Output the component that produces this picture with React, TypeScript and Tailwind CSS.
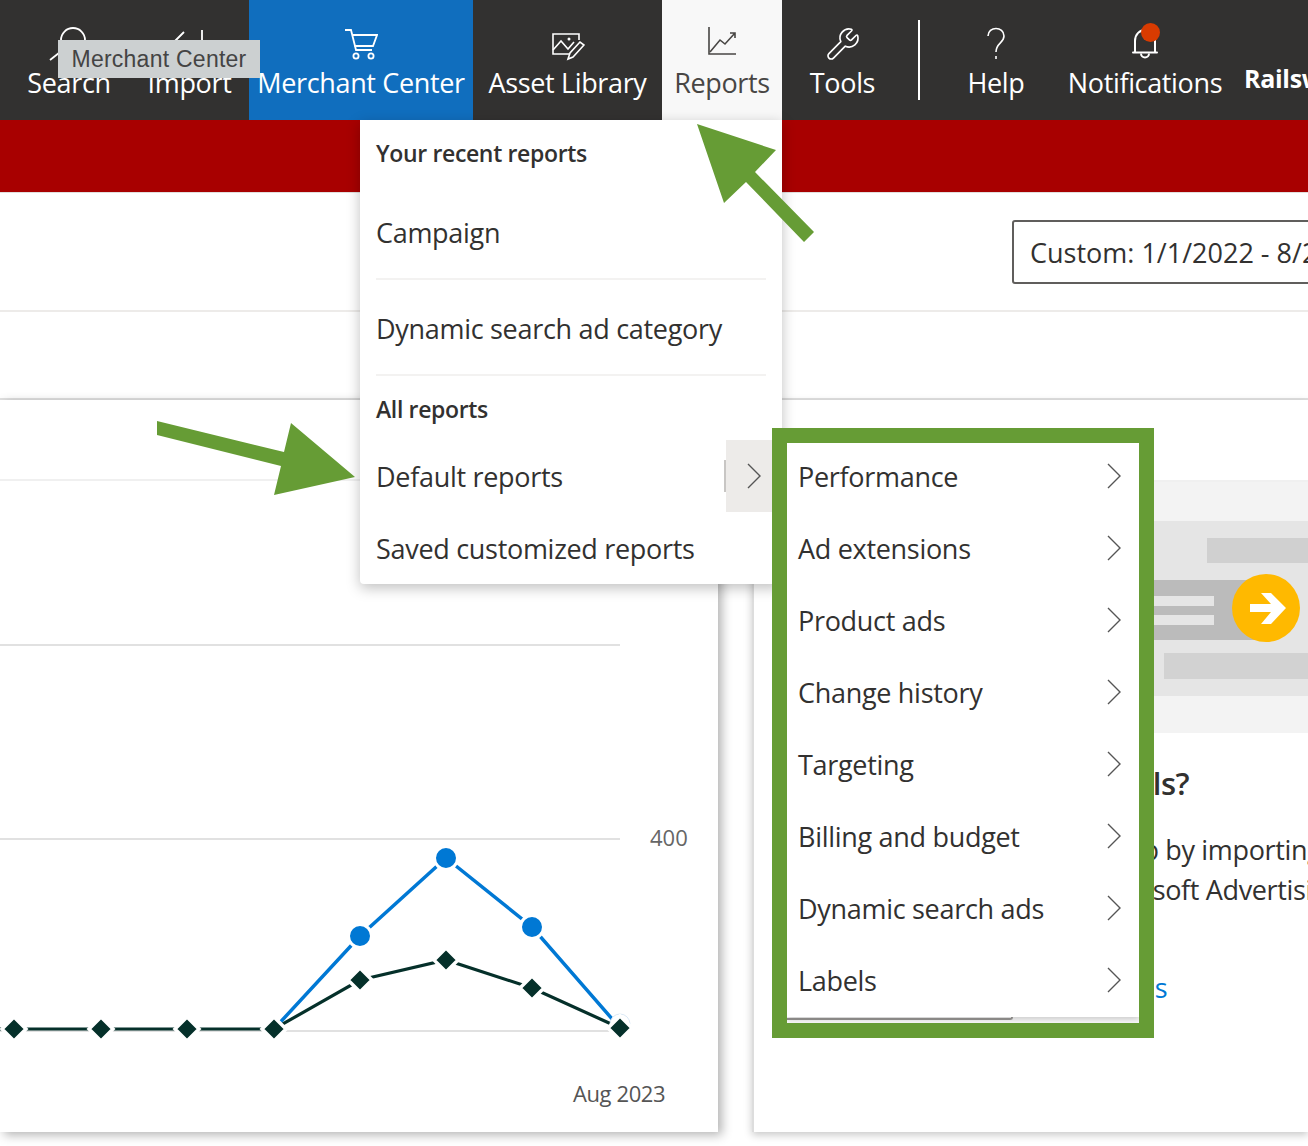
import React from "react";
import { Wrench } from "lucide-react";

const FONT = "[font-family:'Open_Sans','Noto_Sans',sans-serif]";

function Chevron({ className = "" }: { className?: string }) {
  return (
    <svg width="14" height="26" viewBox="0 0 14 26" className={className} fill="none" stroke="#555" strokeWidth="1.4">
      <polyline points="1,1 13,13 1,25" />
    </svg>
  );
}

function NavItem({ label, icon, className = "" }: { label: string; icon: React.ReactNode; className?: string }) {
  return (
    <div className={`flex h-[120px] shrink-0 flex-col items-center ${className}`}>
      <div className="mt-[24px] flex h-[40px] items-center justify-center">{icon}</div>
      <div className="mt-[1px] whitespace-nowrap text-[27px] leading-[36px] tracking-[-0.35px]">{label}</div>
    </div>
  );
}

const subItems = ["Performance", "Ad extensions", "Product ads", "Change history", "Targeting", "Billing and budget", "Dynamic search ads", "Labels"];

const flat = [14, 101, 187, 274];
const blue: [number, number][] = [[360, 936], [446, 858], [532, 927]];
const dark: [number, number][] = [[360, 980], [446, 960], [532, 988]];

function Diamond({ x, y }: { x: number; y: number }) {
  return <polygon points={`${x},${y - 12} ${x + 12},${y} ${x},${y + 12} ${x - 12},${y}`} fill="#05302a" stroke="#fff" strokeWidth="3.5" />;
}

export default function App() {
  return (
    <div className={`relative h-[1146px] w-[1308px] overflow-hidden bg-white ${FONT}`}>
      <header className="flex h-[120px] bg-[#323130] text-white">
        <NavItem
          label="Search"
          className="ml-[4px] w-[130px]"
          icon={
            <svg width="46" height="40" viewBox="0 0 46 40" fill="none" stroke="#fff" strokeWidth="1.8">
              <circle cx="27" cy="16" r="12" />
              <path d="M18 25 4 36" />
            </svg>
          }
        />
        <NavItem
          label="Import"
          className="w-[111px]"
          icon={
            <svg width="40" height="40" viewBox="0 0 40 40" fill="none" stroke="#fff" strokeWidth="1.8">
              <path d="M5 17 14 8M32 6V30M4 30H36" />
            </svg>
          }
        />
        <div className="w-[4px] shrink-0" />
        <NavItem
          label="Merchant Center"
          className="w-[224px] bg-[#106ebe]"
          icon={
            <svg width="34" height="34" viewBox="0 0 34 34" fill="none" stroke="#fff" strokeWidth="1.8" className="mt-[2px]">
              <path d="M1 2H7L12 22H28" />
              <path d="M8 7H33L29 18H10.5" />
              <circle cx="12" cy="28" r="2.6" />
              <circle cx="27" cy="28" r="2.6" />
            </svg>
          }
        />
        <NavItem
          label="Asset Library"
          className="w-[189px]"
          icon={
            <svg width="34" height="30" viewBox="0 0 34 30" fill="none" stroke="#fff" strokeWidth="1.6" className="mt-[6px]">
              <path d="M19 22H2V2H28V8" />
              <path d="M2 18 10 9 17 17 23 10" />
              <circle cx="18" cy="7" r="0.7" fill="#fff" />
              <path d="M17 27 19 21 29 10 33 13 22 25Z" />
            </svg>
          }
        />
        <NavItem
          label="Reports"
          className="w-[120px] bg-[#f8f8f8] text-[#484644]"
          icon={
            <svg width="30" height="30" viewBox="0 0 30 30" fill="none" stroke="#484644" strokeWidth="1.6" className="-mt-[6px]">
              <path d="M2 1V28H29" />
              <path d="M3 26 13 14 18 18 28 7M23 7H28V12" />
            </svg>
          }
        />
        <NavItem label="Tools" className="w-[121px]" icon={<Wrench size={36} strokeWidth={1.1} className="scale-x-[-1] rotate-90" />} />
        <div className="mt-[20px] h-[80px] w-[2px] shrink-0 translate-x-[15px] bg-white" />
        <div className="w-[15px] shrink-0" />
        <NavItem
          label="Help"
          className="w-[152px]"
          icon={
            <svg width="20" height="34" viewBox="0 0 20 34" fill="none" stroke="#fff" strokeWidth="1.6">
              <path d="M2 9C2 -1 18 -1 18 9 18 16 10 16 10 25" />
              <path d="M10 29V32" />
            </svg>
          }
        />
        <div className="relative">
          <NavItem
            label="Notifications"
            className="w-[146px]"
            icon={
              <svg width="26" height="30" viewBox="0 0 26 30" fill="none" stroke="#fff" strokeWidth="2">
                <path d="M3 23V12C3 5 8 1 13 1S23 5 23 12V23" />
                <path d="M1 23.5H25" strokeLinecap="round" />
                <path d="M9 24.5a4 4 0 0 0 8 0" />
              </svg>
            }
          />
          <div className="absolute left-[69px] top-[23px] h-[19px] w-[19px] rounded-full bg-[#d83b01]" />
        </div>
        <div className="ml-[26px] mt-[60px] whitespace-nowrap text-[25px] font-bold leading-[36px] tracking-[-0.3px]">Railsware</div>
      </header>

      <div className="h-[73px] border-b border-[#e1dfdd] bg-[#a80000]" />

      <div className="flex h-[119px] items-center overflow-hidden border-b-2 border-[#edebe9] pl-[1012px]">
        <div className="flex h-[64px] w-[400px] shrink-0 items-center whitespace-nowrap rounded-[3px] border-2 border-[#605e5c] pl-[16px] pt-[3px] text-[27px] text-[#323130]">
          Custom: 1/1/2022 - 8/21/2023
        </div>
      </div>

      <div className="h-[88px] border-b-2 border-[#e1e1e1]" />

      <main className="flex">
        <section className="h-[732px] w-[718px] shrink-0 bg-white shadow-[4px_3px_10px_rgba(0,0,0,0.3)]">
          <div className="h-[81px] border-b-2 border-[#f0f0f0]" />
          <svg viewBox="0 481 718 651" className="block h-[651px] w-[718px]">
            {[645, 839, 1031].map((y) => (
              <line key={y} x1="0" x2="620" y1={y} y2={y} stroke="#e1e1e1" strokeWidth="2" />
            ))}
            <text x="650" y="846" fontSize="22" fill="#666">400</text>
            <text x="573" y="1102" fontSize="22" letterSpacing="-0.4" fill="#555">Aug 2023</text>
            <polyline points={`274,1029 ${blue.map((p) => p.join(",")).join(" ")} 620,1028`} fill="none" stroke="#0078d4" strokeWidth="3.5" />
            <polyline points={`0,1029 274,1029 ${dark.map((p) => p.join(",")).join(" ")} 620,1028`} fill="none" stroke="#05302a" strokeWidth="3.2" />
            {blue.map(([x, y]) => (
              <circle key={x} cx={x} cy={y} r="11.5" fill="#0078d4" stroke="#fff" strokeWidth="3" />
            ))}
            <circle cx="620" cy="1024" r="10" fill="#fff" stroke="#dbe9f6" strokeWidth="1" />
            {flat.map((x) => <Diamond key={x} x={x} y={1029} />)}
            {dark.map(([x, y]) => <Diamond key={x} x={x} y={y} />)}
            <Diamond x={620} y={1028} />
          </svg>
        </section>

        <section className="ml-[34px] h-[732px] flex-1 overflow-hidden border-l-2 border-[#dddddd] bg-white shadow-[0_3px_8px_rgba(0,0,0,0.22)]">
          <div className="h-[82px] border-b-2 border-[#f0f0f0]" />
          <svg viewBox="787 482 521 251" className="ml-[33px] block h-[251px] w-[521px]">
            <rect x="787" y="482" width="521" height="251" fill="#f3f3f3" />
            <rect x="787" y="521" width="521" height="175" fill="#e5e5e5" />
            <rect x="1207" y="538" width="101" height="25" fill="#d0d0d0" />
            <rect x="787" y="580" width="479" height="60" fill="#bbbbbb" />
            <rect x="787" y="596" width="427" height="10" fill="#e5e5e5" />
            <rect x="787" y="615" width="427" height="10" fill="#e5e5e5" />
            <rect x="1164" y="653" width="144" height="26" fill="#d2d2d2" />
            <circle cx="1266" cy="608" r="34" fill="#ffb900" />
            <path d="M1250 604H1271L1261 593H1271L1286 608 1271 624H1261L1271 612H1250Z" fill="#fff" />
          </svg>
          <div className="ml-[33px] mt-[29px] whitespace-nowrap text-[31px] font-semibold leading-[42px] tracking-[-0.5px] text-[#323130]">
            Advertise on new channels?
          </div>
          <div className="mt-[26px] whitespace-nowrap pl-[45px] text-[27px] leading-[40px] tracking-[-0.35px] text-[#323130]">
            <div>Save time on campaign setup by importing</div>
            <div className="pl-[158px]">them into Microsoft Advertising</div>
          </div>
          <div className="mt-[58px] pl-[128px] text-[27px] leading-[40px] tracking-[-0.35px] text-[#0078d4]">
            <span className="whitespace-nowrap">Import your campaigns</span>
          </div>
        </section>
      </main>

      {/* Reports menu */}
      <div className="absolute left-[360px] top-[120px] h-[464px] w-[422px] rounded-b-[4px] bg-white pl-[16px] text-[#323130] shadow-[0_4px_14px_rgba(0,0,0,0.25)]">
        <div className="flex h-[68px] items-center whitespace-nowrap pb-[2px] text-[23px] font-semibold tracking-[-0.35px]">Your recent reports</div>
        <div className="flex h-[92px] w-[390px] items-center border-b-2 border-[#f3f2f1] text-[27px] tracking-[-0.3px]">Campaign</div>
        <div className="flex h-[96px] w-[390px] items-center whitespace-nowrap border-b-2 border-[#f3f2f1] pt-[4px] text-[27px] tracking-[-0.3px]">Dynamic search ad category</div>
        <div className="flex h-[66px] items-center text-[23px] font-semibold tracking-[-0.35px]">All reports</div>
        <div className="relative flex h-[72px] items-center whitespace-nowrap pb-[2px] text-[27px] tracking-[-0.3px]">
          Default reports
          <div className="absolute left-[348px] top-[18px] h-[32px] w-[2px] bg-[#c8c6c4]" />
          <div className="absolute left-[350px] -top-[2px] flex h-[72px] w-[46px] items-center justify-center bg-[#edebe9] pl-[10px]">
            <Chevron />
          </div>
        </div>
        <div className="flex h-[70px] items-center whitespace-nowrap text-[27px] tracking-[-0.3px]">Saved customized reports</div>
      </div>

      {/* Submenu inside annotation frame */}
      <div className="absolute left-[772px] top-[428px] h-[610px] w-[382px] overflow-hidden border-[15px] border-[#669c35] bg-[#f8f8f8]">
        <div className="-mt-[2px] bg-white pl-[11px] pr-[18px] text-[#323130] shadow-[0_2px_6px_rgba(0,0,0,0.2)]">
          {subItems.map((s) => (
            <div key={s} className="flex h-[72px] items-center justify-between whitespace-nowrap text-[27px] tracking-[-0.3px]">
              {s}
              <Chevron className="-mt-[2px]" />
            </div>
          ))}
        </div>
        <div className="h-[3px] w-[226px] rounded-br-[4px] border-b-2 border-r-2 border-[#8a8886]" />
      </div>

      {/* Tooltip */}
      <div className="absolute left-[58px] top-[40px] flex h-[38px] w-[202px] items-center justify-center whitespace-nowrap bg-[#ccd0d1] text-[23px] tracking-[0.25px] text-[#444444] [font-family:'Liberation_Sans',sans-serif]">
        Merchant Center
      </div>

      {/* Annotation arrows */}
      <svg className="absolute left-[140px] top-[110px]" width="700" height="400" viewBox="140 110 700 400">
        <polygon points="697,124 776,150 755,172 814,232 804,242 746,182 724,203" fill="#669c35" />
        <polygon points="157,421 284,452 291,423 355,477 274,495 281,466 157,435" fill="#669c35" />
      </svg>
    </div>
  );
}
